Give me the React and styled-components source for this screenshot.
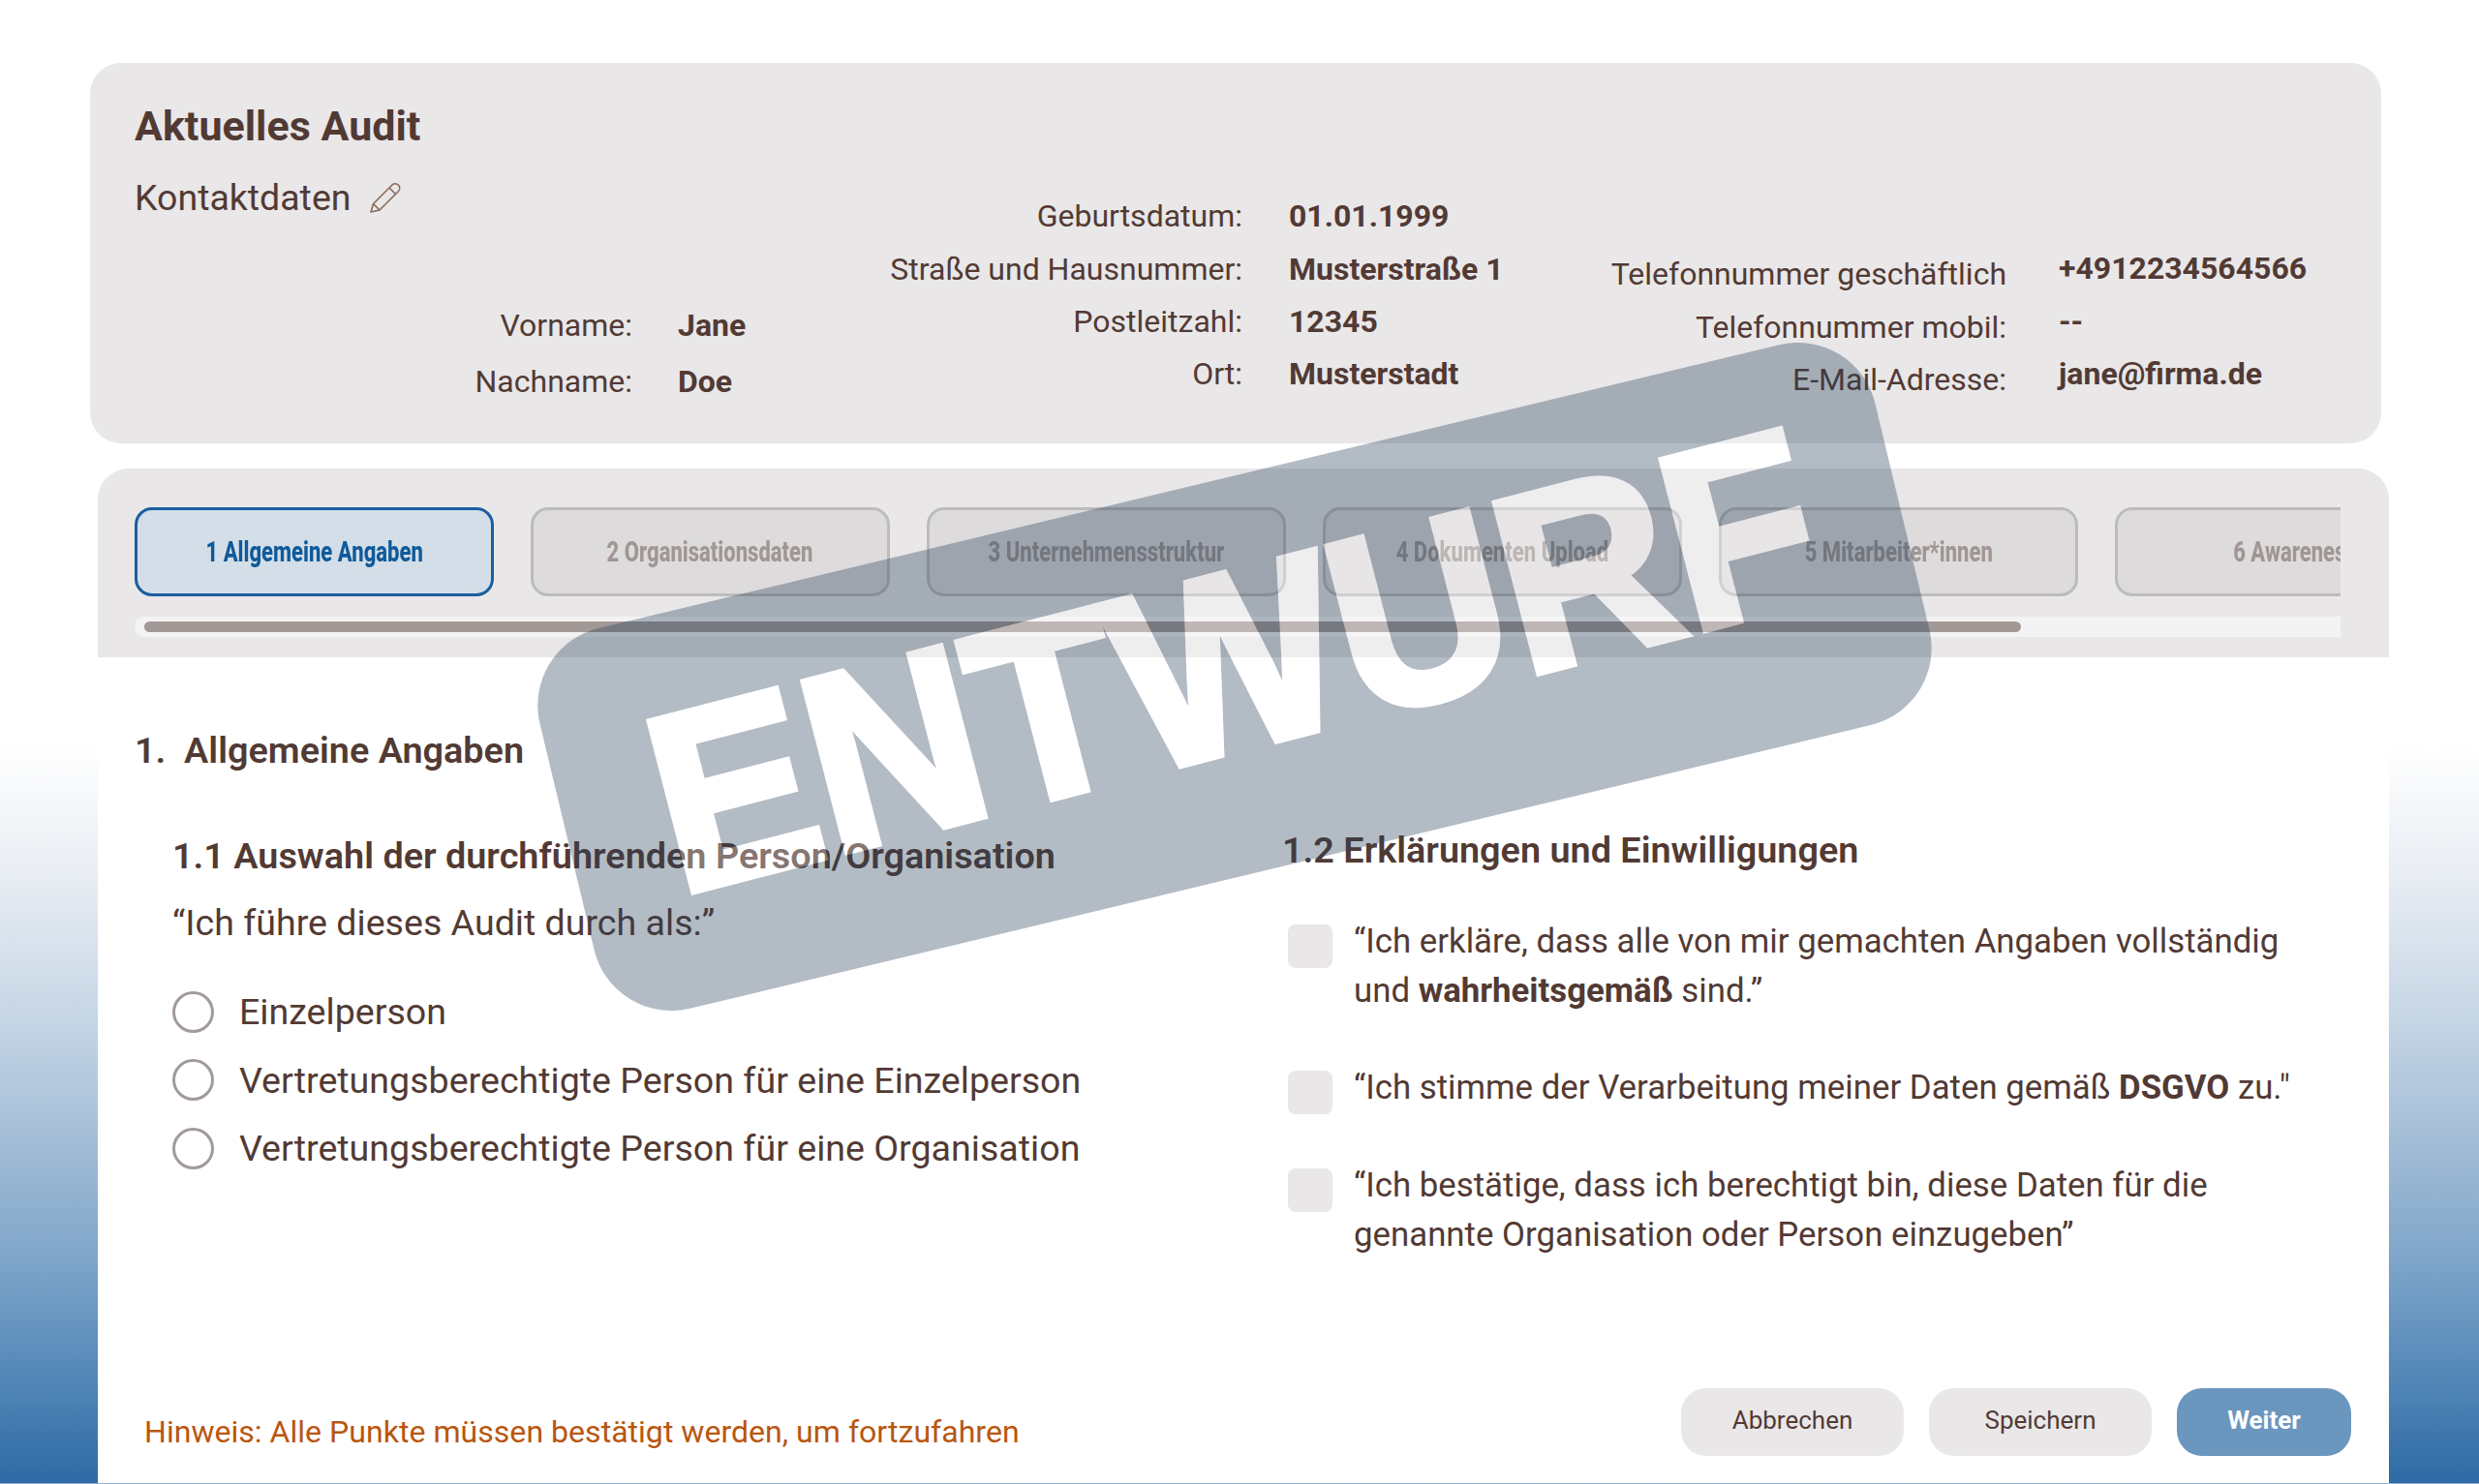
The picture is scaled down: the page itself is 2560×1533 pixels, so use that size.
import React from "react";
import styled, { createGlobalStyle } from "styled-components";

const GlobalStyle = createGlobalStyle`
  html, body {
    margin: 0;
    padding: 0;
    background: #ffffff;
  }
  * {
    box-sizing: border-box;
  }
`;

const Page = styled.div`
  position: relative;
  width: 2560px;
  height: 1533px;
  overflow: hidden;
  padding-top: 65px;
  display: flex;
  flex-direction: column;
  font-family: Roboto, "Liberation Sans", sans-serif;
  color: #523a34;
  background: linear-gradient(
    180deg,
    #ffffff 0,
    #ffffff 770px,
    #e8edf3 905px,
    #c8d7e6 1043px,
    #a6bfd8 1170px,
    #7ba3c8 1311px,
    #5488b8 1420px,
    #2e6aa5 1532px,
    #f2f7fb 1533px
  );
`;

const ContactCard = styled.section`
  margin-left: 93px;
  width: 2366px;
  height: 393px;
  flex: none;
  display: flex;
  padding-left: 46px;
  background: #e9e7e8;
  border-radius: 32px;
`;

const ContactColumn = styled.div`
  width: ${(p) => p.$width}px;
  padding-top: ${(p) => p.$top}px;
  flex: none;
`;

const CardTitle = styled.h1`
  margin: 0;
  font-size: 43px;
  line-height: 50px;
  font-weight: 700;
`;

const SubTitle = styled.h2`
  margin: 24px 0 0;
  display: flex;
  align-items: center;
  gap: 19px;
  font-size: 37.5px;
  line-height: 50px;
  font-weight: 400;
`;

const NameRows = styled.div`
  margin-top: 78px;
`;

const DetailRow = styled.div`
  display: flex;
  align-items: center;
  height: ${(p) => p.$height || 54.4}px;
`;

const Label = styled.span`
  width: ${(p) => p.$width}px;
  flex: none;
  text-align: right;
  font-size: 32px;
  white-space: nowrap;
`;

const Value = styled.span`
  margin-left: ${(p) => p.$gap}px;
  margin-bottom: ${(p) => p.$lift || 0}px;
  font-size: 32px;
  font-weight: 700;
  white-space: nowrap;
`;

const Panel = styled.section`
  margin: 26px 0 1px 101px;
  width: 2366px;
  flex: 1;
  display: flex;
  flex-direction: column;
  background: #ffffff;
  border-radius: 32px 32px 0 0;
  overflow: hidden;
`;

const TabHeader = styled.div`
  height: 195px;
  flex: none;
  padding: 40px 50px 0 38px;
  background: #e9e7e8;
`;

const TabRow = styled.div`
  display: flex;
  gap: 38px;
  overflow: hidden;
`;

const Tab = styled.div`
  width: 371px;
  height: 92px;
  flex: none;
  display: flex;
  align-items: center;
  justify-content: center;
  border-radius: 18px;
  border: 3px solid ${(p) => (p.$active ? "#1b5e9e" : "#bdbbbc")};
  background: ${(p) => (p.$active ? "#d4dee8" : "#dddbdc")};
  color: ${(p) => (p.$active ? "#0f5a9a" : "#a09693")};
`;

const TabText = styled.span`
  display: inline-block;
  font-size: 29px;
  font-weight: 800;
  white-space: nowrap;
  transform: scaleX(0.76);
`;

const ScrollTrack = styled.div`
  height: 21px;
  margin-top: 21px;
  padding: 5px 0 0 10px;
  border-radius: 10px 0 0 10px;
  background: #f4f3f4;
`;

const ScrollThumb = styled.div`
  width: 1938px;
  height: 11px;
  border-radius: 6px;
  background: #a29895;
`;

const Body = styled.div`
  flex: 1;
  display: flex;
  flex-direction: column;
  padding: 71px 39px 28px 38px;
`;

const SectionTitle = styled.h2`
  margin: 0;
  font-size: 37.8px;
  line-height: 50px;
  font-weight: 600;
  white-space: pre;
`;

const Columns = styled.div`
  margin-top: 53px;
  display: grid;
  grid-template-columns: 1185px 1fr;
`;

const LeftColumn = styled.div`
  padding: 6px 0 0 39px;
`;

const SubHeading = styled.h3`
  margin: 0;
  font-size: 37.8px;
  line-height: 50px;
  font-weight: 600;
  white-space: nowrap;
`;

const Prompt = styled.p`
  margin: 19px 0 32px;
  font-size: 37.6px;
  line-height: 50px;
`;

const RadioRow = styled.label`
  display: flex;
  align-items: center;
  gap: 26px;
  height: 70.5px;
  font-size: 37.6px;
  white-space: nowrap;
`;

const RadioCircle = styled.span`
  width: 43px;
  height: 43px;
  flex: none;
  border: 3px solid #a29a98;
  border-radius: 50%;
`;

const ConsentList = styled.div`
  margin-top: 44px;
  display: flex;
  flex-direction: column;
  gap: 48.5px;
`;

const ConsentRow = styled.label`
  display: flex;
  align-items: flex-start;
  gap: 22px;
  margin-left: 6px;
  font-size: 34.8px;
  line-height: 51px;
`;

const CheckBox = styled.span`
  width: 46px;
  height: 45px;
  margin-top: 8px;
  flex: none;
  border-radius: 8px;
  background: #e9e7e8;
`;

const Footer = styled.div`
  margin-top: auto;
  display: flex;
  align-items: flex-end;
  justify-content: space-between;
`;

const Hint = styled.p`
  margin: 0 0 0 10px;
  padding-top: 20px;
  font-size: 32.1px;
  line-height: 50px;
  color: #b9560f;
`;

const ButtonGroup = styled.div`
  display: flex;
  gap: 26px;
`;

const Button = styled.button`
  width: ${(p) => (p.$primary ? 180 : 230)}px;
  height: 70px;
  padding: 0 0 4px;
  border: none;
  border-radius: 26px;
  font-family: inherit;
  font-size: 26px;
  font-weight: ${(p) => (p.$primary ? 700 : 400)};
  color: ${(p) => (p.$primary ? "#ffffff" : "#523a34")};
  background: ${(p) => (p.$primary ? "#6b96be" : "#e9e7e8")};
`;

const Stamp = styled.svg`
  position: absolute;
  left: 475px;
  top: 299px;
  width: 1600px;
  height: 800px;
  pointer-events: none;
`;

const PencilIcon = () => (
  <svg width="34" height="34" viewBox="0 0 34 34" fill="none" stroke="#8a6a58" strokeWidth="1.6" strokeLinejoin="round">
    <path d="M2 32 L4.5 23.5 L24 4 a4.6 4.6 0 0 1 6.5 6.5 L11 30 Z" />
    <path d="M4.5 23.5 L11 30 M21 7 L27.5 13.5" />
  </svg>
);

const stampTextTransform = "translate(804 474) rotate(-1) scale(1 1.06)";

const DraftStamp = () => (
  <Stamp viewBox="0 0 1600 800">
    <defs>
      <mask id="stamp-cut" maskUnits="userSpaceOnUse" x="-200" y="-200" width="2000" height="1200">
        <rect x="-200" y="-200" width="2000" height="1200" fill="#fff" />
        <text
          transform={stampTextTransform}
          textAnchor="middle"
          fontFamily="'Liberation Sans', sans-serif"
          fontWeight="700"
          fontSize="246"
          fill="#000"
          stroke="#000"
          strokeWidth="8"
        >
          ENTWURF
        </text>
      </mask>
    </defs>
    <g transform="rotate(-13.5 800 400)">
      <rect x="91" y="198" width="1418" height="404" rx="82" fill="#263f59" fillOpacity="0.35" mask="url(#stamp-cut)" />
      <text
        transform={stampTextTransform}
        textAnchor="middle"
        fontFamily="'Liberation Sans', sans-serif"
        fontWeight="700"
        fontSize="246"
        fill="#ffffff"
        stroke="#ffffff"
        strokeWidth="8"
        opacity="0.3"
      >
        ENTWURF
      </text>
    </g>
  </Stamp>
);

const tabs = [
  "1 Allgemeine Angaben",
  "2 Organisationsdaten",
  "3 Unternehmensstruktur",
  "4 Dokumenten Upload",
  "5 Mitarbeiter*innen",
  "6 Awareness",
];

const roles = [
  "Einzelperson",
  "Vertretungsberechtigte Person für eine Einzelperson",
  "Vertretungsberechtigte Person für eine Organisation",
];

const addressRows = [
  ["Geburtsdatum:", "01.01.1999"],
  ["Straße und Hausnummer:", "Musterstraße 1"],
  ["Postleitzahl:", "12345"],
  ["Ort:", "Musterstadt"],
];

const phoneRows = [
  ["Telefonnummer geschäftlich", "+4912234564566"],
  ["Telefonnummer mobil:", "--"],
  ["E-Mail-Adresse:", "jane@firma.de"],
];

export default function App() {
  return (
    <Page>
      <GlobalStyle />
      <ContactCard>
        <ContactColumn $width={761} $top={40}>
          <CardTitle>Aktuelles Audit</CardTitle>
          <SubTitle>
            Kontaktdaten
            <PencilIcon />
          </SubTitle>
          <NameRows>
            <DetailRow $height={58}>
              <Label $width={514}>Vorname:</Label>
              <Value $gap={47}>Jane</Value>
            </DetailRow>
            <DetailRow $height={58}>
              <Label $width={514}>Nachname:</Label>
              <Value $gap={47}>Doe</Value>
            </DetailRow>
          </NameRows>
        </ContactColumn>
        <ContactColumn $width={750} $top={131}>
          {addressRows.map(([label, value]) => (
            <DetailRow key={label}>
              <Label $width={383}>{label}</Label>
              <Value $gap={48}>{value}</Value>
            </DetailRow>
          ))}
        </ContactColumn>
        <ContactColumn $width={800} $top={191}>
          {phoneRows.map(([label, value]) => (
            <DetailRow key={label}>
              <Label $width={422}>{label}</Label>
              <Value $gap={54} $lift={12}>
                {value}
              </Value>
            </DetailRow>
          ))}
        </ContactColumn>
      </ContactCard>

      <Panel>
        <TabHeader>
          <TabRow>
            {tabs.map((tab, i) => (
              <Tab key={tab} $active={i === 0}>
                <TabText>{tab}</TabText>
              </Tab>
            ))}
          </TabRow>
          <ScrollTrack>
            <ScrollThumb />
          </ScrollTrack>
        </TabHeader>

        <Body>
          <SectionTitle>1.  Allgemeine Angaben</SectionTitle>
          <Columns>
            <LeftColumn>
              <SubHeading>1.1 Auswahl der durchführenden Person/Organisation</SubHeading>
              <Prompt>“Ich führe dieses Audit durch als:”</Prompt>
              {roles.map((role) => (
                <RadioRow key={role}>
                  <RadioCircle />
                  {role}
                </RadioRow>
              ))}
            </LeftColumn>
            <div>
              <SubHeading>1.2 Erklärungen und Einwilligungen</SubHeading>
              <ConsentList>
                <ConsentRow>
                  <CheckBox />
                  <span>
                    “Ich erkläre, dass alle von mir gemachten Angaben vollständig
                    <br />
                    und <b>wahrheitsgemäß</b> sind.”
                  </span>
                </ConsentRow>
                <ConsentRow>
                  <CheckBox />
                  <span>
                    “Ich stimme der Verarbeitung meiner Daten gemäß <b>DSGVO</b> zu."
                  </span>
                </ConsentRow>
                <ConsentRow>
                  <CheckBox />
                  <span>
                    “Ich bestätige, dass ich berechtigt bin, diese Daten für die
                    <br />
                    genannte Organisation oder Person einzugeben”
                  </span>
                </ConsentRow>
              </ConsentList>
            </div>
          </Columns>
          <Footer>
            <Hint>Hinweis: Alle Punkte müssen bestätigt werden, um fortzufahren</Hint>
            <ButtonGroup>
              <Button>Abbrechen</Button>
              <Button>Speichern</Button>
              <Button $primary>Weiter</Button>
            </ButtonGroup>
          </Footer>
        </Body>
      </Panel>

      <DraftStamp />
    </Page>
  );
}
